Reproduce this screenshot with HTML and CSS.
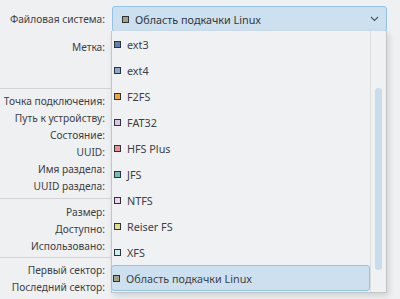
FILE: index.html
```html
<!DOCTYPE html>
<html lang="ru">
<head>
<meta charset="utf-8">
<link rel="stylesheet" href="styles.css">
</head>
<body>
<div class="page">
  <div class="group top">
    <div class="row tall">
      <div class="label">Файловая система:</div>
      <div class="combo">
        <span class="sq c-swap"></span>
        <span class="combo-text">Область подкачки Linux</span>
        <svg class="chev" width="9" height="6" viewBox="0 0 9 6"><path d="M1 1 L4.5 4.5 L8 1" fill="none" stroke="#4d5257" stroke-width="1.1"/></svg>
      </div>
    </div>
    <div class="row tall second">
      <div class="label">Метка:</div>
      <div class="value"></div>
    </div>
  </div>
  <div class="sep sep1"></div>
  <div class="group g2">
    <div class="row"><div class="label">Точка подключения:</div><div class="value"></div></div>
    <div class="row"><div class="label">Путь к устройству:</div><div class="value"></div></div>
    <div class="row"><div class="label">Состояние:</div><div class="value"></div></div>
    <div class="row"><div class="label">UUID:</div><div class="value"></div></div>
    <div class="row"><div class="label">Имя раздела:</div><div class="value"></div></div>
    <div class="row"><div class="label">UUID раздела:</div><div class="value"></div></div>
  </div>
  <div class="sep sep2"></div>
  <div class="group g3">
    <div class="row"><div class="label">Размер:</div><div class="value"></div></div>
    <div class="row"><div class="label">Доступно:</div><div class="value"></div></div>
    <div class="row"><div class="label">Использовано:</div><div class="value"></div></div>
  </div>
  <div class="sep sep3"></div>
  <div class="group g4">
    <div class="row"><div class="label">Первый сектор:</div><div class="value"></div></div>
    <div class="row"><div class="label">Последний сектор:</div><div class="value"></div></div>
  </div>
</div>

<div class="popup">
  <ul class="list">
    <li class="item"><span class="sq c-ext3"></span>ext3</li>
    <li class="item"><span class="sq c-ext4"></span>ext4</li>
    <li class="item"><span class="sq c-f2fs"></span>F2FS</li>
    <li class="item"><span class="sq c-fat32"></span>FAT32</li>
    <li class="item"><span class="sq c-hfs"></span>HFS Plus</li>
    <li class="item"><span class="sq c-jfs"></span>JFS</li>
    <li class="item"><span class="sq c-ntfs"></span>NTFS</li>
    <li class="item"><span class="sq c-reiser"></span>Reiser FS</li>
    <li class="item"><span class="sq c-xfs"></span>XFS</li>
    <li class="item selected"><span class="sq c-swap"></span>Область подкачки Linux</li>
  </ul>
  <div class="scrollbar"><div class="thumb"></div></div>
</div>
</body>
</html>
```

FILE: styles.css
```css
html, body {
  margin: 0;
  padding: 0;
  background: #eff0f1;
  width: 400px;
  height: 299px;
  overflow: hidden;
}
body {
  font-family: "Noto Sans", "DejaVu Sans", sans-serif;
  font-size: 10.8px;
  color: #31363b;
  position: relative;
}
.page {
  display: flex;
  flex-direction: column;
}
.row {
  display: flex;
  align-items: center;
  height: 17px;
}
.row.tall {
  height: 26px;
}
.row.second {
  margin-top: 2px;
}
.label {
  width: 105px;
  flex: none;
  text-align: right;
  white-space: nowrap;
  font-size: 10.2px;
  color: #3b4045;
}
.value {
  flex: 1;
}
.top {
  padding-top: 6px;
}
.combo {
  margin-left: 7px;
  width: 275px;
  height: 26px;
  box-sizing: border-box;
  background: #cde0ef;
  border: 1px solid #93c2e9;
  border-radius: 3px;
  display: flex;
  align-items: center;
  padding-left: 9px;
  padding-right: 6px;
}
.combo-text {
  flex: 1;
  margin-left: 6px;
  color: #31363b;
}
.chev {
  margin-right: 1px;
}
.sep {
  height: 1px;
  width: 111px;
  background: #d3d4d5;
}
.sep1 { margin-top: 28px; }
.g2 { padding-top: 3px; }
.sep2 { margin-top: 4px; }
.g3 { padding-top: 4px; }
.sep3 { margin-top: 3px; }
.g4 { padding-top: 3px; }

.sq {
  display: inline-block;
  width: 5px;
  height: 5px;
  border: 1px solid #2f3236;
  flex: none;
}
.c-ext3 { background: #5b80bb; }
.c-ext4 { background: #8ca9d6; }
.c-f2fs { background: #f2a53a; }
.c-fat32 { background: #dec3ef; }
.c-hfs { background: #ef9090; }
.c-jfs { background: #6fbfb6; }
.c-ntfs { background: #f5d2f5; }
.c-reiser { background: #dfde84; }
.c-xfs { background: #c3f5f5; }
.c-swap { background: #a3a284; }

.popup {
  position: absolute;
  left: 111px;
  top: 31px;
  width: 276px;
  height: 262px;
  box-sizing: border-box;
  background: #f0f1f2;
  border: 1px solid #c4c5c6;
  border-top: none;
  box-shadow: 2px 3px 6px rgba(0, 0, 0, 0.13);
  display: flex;
}
.list {
  list-style: none;
  margin: 0;
  padding: 0;
  flex: 1;
  display: flex;
  flex-direction: column;
}
.item {
  height: 26px;
  box-sizing: border-box;
  display: flex;
  align-items: center;
  padding-left: 2px;
  gap: 6px;
  color: #3b4045;
}
.item.selected {
  background: #cde0ef;
  border: 1px solid #93c2e9;
  border-radius: 3px;
  padding-left: 1px;
  margin-left: -1px;
}
.scrollbar {
  width: 15px;
  flex: none;
  border-left: 1px solid #dcdddd;
  position: relative;
}
.thumb {
  position: absolute;
  left: 4px;
  top: 57px;
  width: 7px;
  height: 182px;
  border-radius: 4px;
  background: #c8dcec;
}
```
